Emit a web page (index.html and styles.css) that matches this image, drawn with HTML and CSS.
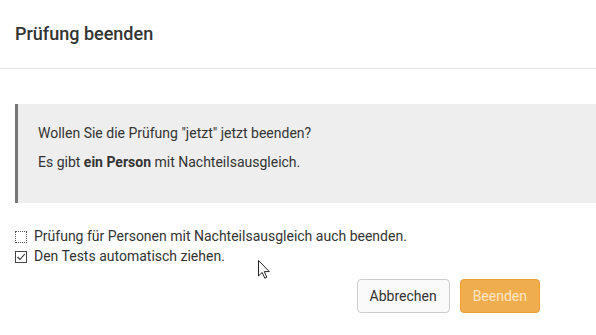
FILE: index.html
```html
<!DOCTYPE html>
<html lang="de">
    <head>
        <link rel="stylesheet" href="styles.css">
    </head>
    <body>
        <div class="modal">
            <div class="modal_header">
                <h4 class="modal_title">Prüfung beenden</h4>
            </div>

            <div class="modal_body">
                <div class="notice">
                    <p>Wollen Sie die Prüfung "jetzt" jetzt beenden?</p>
                    <p>Es gibt <b>ein Person</b> mit Nachteilsausgleich.</p>
                </div>

                <label class="check">
                    <span class="box box_dotted"></span>
                    Prüfung für Personen mit Nachteilsausgleich auch beenden.
                </label>
                <label class="check">
                    <span class="box">
                        <svg width="10" height="10" viewBox="0 0 10 10"><path d="M1.5 5 L4 7.5 L8.8 2" fill="none" stroke="#333" stroke-width="1.1"/></svg>
                    </span>
                    Den Tests automatisch ziehen.
                </label>
            </div>

            <div class="modal_footer">
                <button class="btn btn_default">Abbrechen</button>
                <button class="btn btn_warning">Beenden</button>
            </div>
        </div>

        <svg class="cursor" width="13" height="20" viewBox="0 0 13 20">
            <path d="M0.5 0.5 L0.5 16 L4.2 12.4 L6.8 18.2 L8.8 17.3 L6.3 11.6 L11.3 11.6 Z" fill="#fff" stroke="#222" stroke-width="1" stroke-linejoin="miter"/>
        </svg>
    </body>
</html>
```

FILE: styles.css
```css
body{
    margin: 0;
    background: #fff;
    font-family: Roboto, "Liberation Sans", sans-serif;
    color: #333;
    position: relative;
    overflow: hidden;
}

.modal_header{
    padding: 21px 15px;
    border-bottom: 1px solid #e5e5e5;
}

.modal_title{
    margin: 0;
    font-size: 18px;
    font-weight: 500;
    line-height: 26px;
}

.modal_body{
    padding: 35px 0 0 15px;
}

.notice{
    background: #eeeeee;
    border-left: 3px solid #777;
    padding: 19px 20px 22px 20px;
    font-size: 14px;
    line-height: 20px;
}

.notice p{
    margin: 0 0 9px 0;
}

.notice b{
    font-weight: 700;
}

.check{
    display: flex;
    align-items: flex-start;
    font-size: 14px;
    line-height: 20px;
    height: 20px;
}

.notice + .check{
    margin-top: 23px;
}

.box{
    width: 10px;
    height: 10px;
    border: 1px solid #444;
    margin: 5px 7px 0 0;
    display: flex;
    align-items: center;
    justify-content: center;
    background: #fff;
}

.box_dotted{
    border: 1px dotted #555;
}

.modal_footer{
    display: flex;
    justify-content: flex-end;
    gap: 10px;
    padding: 13px 56px 0 0;
}

.btn{
    font-family: Roboto, "Liberation Sans", sans-serif;
    font-size: 14px;
    line-height: 20px;
    padding: 6px 12px;
    border-radius: 4px;
    border: 1px solid;
}

.btn_default{
    background: #fafafa;
    border-color: #cccccc;
    color: #333;
}

.btn_warning{
    background: #f0ad4e;
    border-color: #eea236;
    color: #fce6c4;
}

.cursor{
    position: absolute;
    left: 258px;
    top: 260px;
}
```
